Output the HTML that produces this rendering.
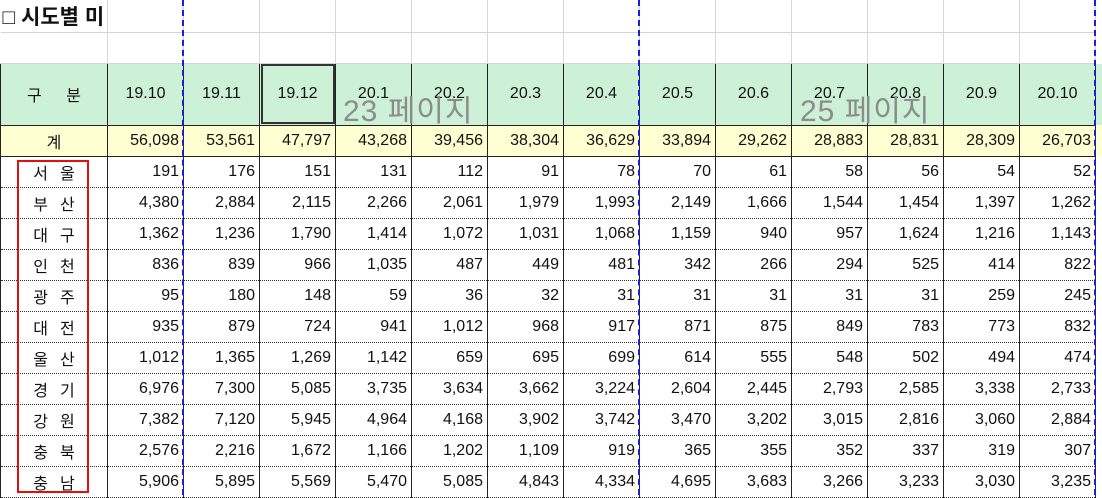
<!DOCTYPE html>
<html><head><meta charset="utf-8"><style>
body{margin:0;width:1102px;height:495px;overflow:hidden;background:#fff;font-family:"Liberation Sans","Noto Sans CJK KR",sans-serif;position:relative}
table{border-collapse:collapse;table-layout:fixed;position:absolute;left:0;top:0}
td{padding:0 4px 0 0;font-size:16px;color:#111;white-space:nowrap;overflow:hidden;text-align:right;border-left:1px solid #222;border-right:1px solid #222}
tr.t td{border:1px solid #d4d4d4;border-top:none}
tr.h td{background:#cdf1d6;border:1px solid #222;text-align:center;padding:0}
tr.s td{background:#ffffd2;border-top:1px solid #222;border-bottom:1px solid #222}
tr.s td:first-child{text-align:center;padding:0}
tr.b td{border-bottom:1px dotted #333}
tr.b td:first-child{text-align:center;padding:0;letter-spacing:12px;text-indent:12px}
.ov{position:absolute;color:#8c8c8c;font-size:30px;letter-spacing:1px}
.bl{position:absolute;top:0;width:0;height:495px;border-left:2px dashed #1c1ce0}
</style></head><body>
<table>
<colgroup><col style="width:107px"><col style="width:76px"><col style="width:76px"><col style="width:76px"><col style="width:76px"><col style="width:76px"><col style="width:76px"><col style="width:76px"><col style="width:76px"><col style="width:76px"><col style="width:76px"><col style="width:76px"><col style="width:76px"><col style="width:76px"></colgroup>
<tr class="t" style="height:32px"><td style="text-align:left;font-weight:bold;font-size:21px;padding:0 0 0 2px;border-left:none;overflow:hidden"><span style="font-weight:normal">□</span> 시도별 미</td><td></td><td></td><td></td><td></td><td></td><td></td><td></td><td></td><td></td><td></td><td></td><td></td><td></td></tr>
<tr class="t" style="height:31px"><td style="border-left:none"></td><td></td><td></td><td></td><td></td><td></td><td></td><td></td><td></td><td></td><td></td><td></td><td></td><td></td></tr>
<tr class="h" style="height:62px"><td style="letter-spacing:10px;text-indent:10px">구 분</td><td>19.10</td><td>19.11</td><td style="outline:2px solid #333;outline-offset:-3px">19.12</td><td>20.1</td><td>20.2</td><td>20.3</td><td>20.4</td><td>20.5</td><td>20.6</td><td>20.7</td><td>20.8</td><td>20.9</td><td>20.10</td></tr>
<tr class="s" style="height:31px"><td>계</td><td>56,098</td><td>53,561</td><td>47,797</td><td>43,268</td><td>39,456</td><td>38,304</td><td>36,629</td><td>33,894</td><td>29,262</td><td>28,883</td><td>28,831</td><td>28,309</td><td>26,703</td></tr>
<tr class="b" style="height:31px"><td>서울</td><td>191</td><td>176</td><td>151</td><td>131</td><td>112</td><td>91</td><td>78</td><td>70</td><td>61</td><td>58</td><td>56</td><td>54</td><td>52</td></tr>
<tr class="b" style="height:31px"><td>부산</td><td>4,380</td><td>2,884</td><td>2,115</td><td>2,266</td><td>2,061</td><td>1,979</td><td>1,993</td><td>2,149</td><td>1,666</td><td>1,544</td><td>1,454</td><td>1,397</td><td>1,262</td></tr>
<tr class="b" style="height:31px"><td>대구</td><td>1,362</td><td>1,236</td><td>1,790</td><td>1,414</td><td>1,072</td><td>1,031</td><td>1,068</td><td>1,159</td><td>940</td><td>957</td><td>1,624</td><td>1,216</td><td>1,143</td></tr>
<tr class="b" style="height:31px"><td>인천</td><td>836</td><td>839</td><td>966</td><td>1,035</td><td>487</td><td>449</td><td>481</td><td>342</td><td>266</td><td>294</td><td>525</td><td>414</td><td>822</td></tr>
<tr class="b" style="height:31px"><td>광주</td><td>95</td><td>180</td><td>148</td><td>59</td><td>36</td><td>32</td><td>31</td><td>31</td><td>31</td><td>31</td><td>31</td><td>259</td><td>245</td></tr>
<tr class="b" style="height:31px"><td>대전</td><td>935</td><td>879</td><td>724</td><td>941</td><td>1,012</td><td>968</td><td>917</td><td>871</td><td>875</td><td>849</td><td>783</td><td>773</td><td>832</td></tr>
<tr class="b" style="height:31px"><td>울산</td><td>1,012</td><td>1,365</td><td>1,269</td><td>1,142</td><td>659</td><td>695</td><td>699</td><td>614</td><td>555</td><td>548</td><td>502</td><td>494</td><td>474</td></tr>
<tr class="b" style="height:31px"><td>경기</td><td>6,976</td><td>7,300</td><td>5,085</td><td>3,735</td><td>3,634</td><td>3,662</td><td>3,224</td><td>2,604</td><td>2,445</td><td>2,793</td><td>2,585</td><td>3,338</td><td>2,733</td></tr>
<tr class="b" style="height:31px"><td>강원</td><td>7,382</td><td>7,120</td><td>5,945</td><td>4,964</td><td>4,168</td><td>3,902</td><td>3,742</td><td>3,470</td><td>3,202</td><td>3,015</td><td>2,816</td><td>3,060</td><td>2,884</td></tr>
<tr class="b" style="height:31px"><td>충북</td><td>2,576</td><td>2,216</td><td>1,672</td><td>1,166</td><td>1,202</td><td>1,109</td><td>919</td><td>365</td><td>355</td><td>352</td><td>337</td><td>319</td><td>307</td></tr>
<tr class="b" style="height:31px"><td>충남</td><td>5,906</td><td>5,895</td><td>5,569</td><td>5,470</td><td>5,085</td><td>4,843</td><td>4,334</td><td>4,695</td><td>3,683</td><td>3,266</td><td>3,233</td><td>3,030</td><td>3,235</td></tr>
</table>
<div style="position:absolute;left:1096px;top:64px;width:6px;height:61px;background:#cdf1d6"></div>
<div style="position:absolute;left:1096px;top:126px;width:6px;height:30px;background:#ffffd2"></div>
<div class="ov" style="left:343px;top:86px">23 페이지</div>
<div class="ov" style="left:800px;top:86px">25 페이지</div>
<div class="bl" style="left:182px"></div>
<div class="bl" style="left:638px"></div>
<div class="bl" style="left:1094px"></div>
<div style="position:absolute;left:17px;top:160px;width:68px;height:329px;border:2px solid #e01010"></div>
</body></html>
